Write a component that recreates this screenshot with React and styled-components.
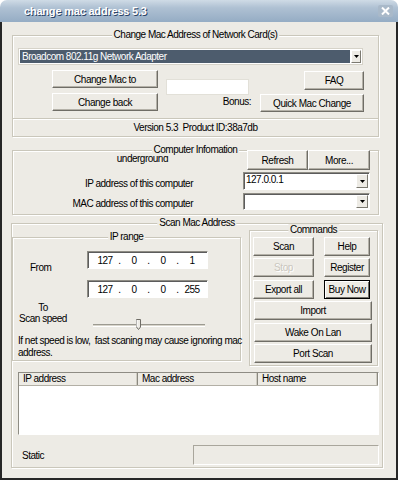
import React from "react";
import styled, { createGlobalStyle } from "styled-components";

const FONT = `"Liberation Sans", Arial, sans-serif`;
const BG = "#edebe5";

const GlobalStyle = createGlobalStyle`
  html, body { margin: 0; padding: 0; background: #fff; }
  body { font-family: ${FONT}; font-size: 10px; letter-spacing: -0.5px; color: #000; }
  * { box-sizing: border-box; }
`;

const Window = styled.div`
  width: 398px;
  height: 480px;
  display: flex;
  flex-direction: column;
  overflow: hidden;
`;

const TitleBar = styled.div`
  height: 22px;
  flex: none;
  display: flex;
  align-items: center;
  justify-content: space-between;
  padding: 0 5px 0 24px;
  border-radius: 7px 7px 0 0;
  background: linear-gradient(180deg, #cfdbe6 0%, #afc1d3 35%, #95acc4 100%);
`;

const Title = styled.span`
  font: bold 11px "Liberation Sans", Arial, sans-serif;
  letter-spacing: -0.2px;
  color: #fff;
  text-shadow: 1px 1px 0 #2c4466;
`;

const CloseBox = styled.div`
  width: 15px;
  height: 12px;
  border-radius: 2px;
  background: #a9b9c9;
  display: flex;
  align-items: center;
  justify-content: center;
`;

const Body = styled.div`
  flex: 1;
  background: ${BG};
  border: 2px solid #262626;
  border-top: none;
  display: flex;
  flex-direction: column;
`;

const Group = styled.div`
  position: relative;
  flex: none;
  margin: ${(p) => p.$mt}px 0 0 ${(p) => p.$ml}px;
  width: ${(p) => p.$w}px;
  height: ${(p) => p.$h}px;
  border: 1px solid #cac7bb;
  box-shadow: inset 1px 1px 0 #fff, 1px 1px 0 #fff;
`;

const Legend = styled.span`
  position: absolute;
  top: -7px;
  left: 50%;
  transform: translateX(-50%);
  padding: 0 2px;
  background: ${BG};
  line-height: 12px;
  white-space: nowrap;
`;

const Button = styled.button`
  flex: none;
  width: ${(p) => p.$w}px;
  height: ${(p) => p.$h || 19}px;
  margin: 0;
  padding: 0;
  font-family: ${FONT};
  font-size: 10px;
  letter-spacing: -0.45px;
  color: ${(p) => (p.disabled ? "#c9c6bd" : "#000")};
  text-shadow: ${(p) => (p.disabled ? "1px 1px 0 #fff" : "none")};
  background: ${BG};
  border: 1px solid;
  border-color: ${(p) => (p.$default ? "#000" : "#fff #6f6d66 #6f6d66 #fff")};
  box-shadow: ${(p) =>
    p.$default
      ? "inset 1px 1px 0 #fff, inset -1px -1px 0 #6f6d66"
      : "inset -1px -1px 0 #b4b1a8"};
`;

/* --- network card combo --- */
const CardSelect = styled.div`
  display: flex;
  margin: 12px 0 0 5px;
  width: 345px;
  height: 17px;
  padding: 1px;
  background: #fff;
  border: 1px solid #d6d3c9;
`;

const CardValue = styled.div`
  flex: 1;
  background: #4d5c6d;
  color: #fff;
  line-height: 13px;
  padding-left: 2px;
`;

const ArrowBtn = styled.div`
  width: ${(p) => p.$w || 10}px;
  margin-left: 1px;
  display: flex;
  align-items: center;
  justify-content: center;
  background: ${BG};
  border: 1px solid;
  border-color: #fff #7b7970 #7b7970 #fff;
`;

const MacRow = styled.div`
  display: flex;
  margin-top: 5px;
  padding-left: 39px;
`;

const Stack = styled.div`
  display: flex;
  flex-direction: column;
  gap: ${(p) => p.$gap}px;
`;

const MiddleCol = styled.div`
  width: 85px;
  margin-left: 8px;
  display: flex;
  flex-direction: column;
`;

const TextInput = styled.div`
  width: 83px;
  height: 16px;
  margin-top: 9px;
  background: #fff;
  border: 1px solid #e2e0d8;
`;

const BonusLabel = styled.div`
  text-align: right;
  line-height: 12px;
  margin-top: 1px;
`;

const RightCol = styled.div`
  width: 104px;
  margin-left: 9px;
  display: flex;
  flex-direction: column;
  align-items: flex-end;
  gap: 4px;
  padding-top: 1px;
`;

const Separator = styled.div`
  margin-top: 6px;
  height: 2px;
  border-top: 1px solid #cac7bb;
  border-bottom: 1px solid #fff;
`;

const VersionLine = styled.div`
  height: 15px;
  line-height: 15px;
  text-align: center;
`;

/* --- computer information --- */
const InfoRow = styled.div`
  display: flex;
  align-items: flex-end;
  height: ${(p) => p.$h}px;
  margin-top: ${(p) => p.$mt}px;
`;

const InfoLabel = styled.div`
  width: 180px;
  text-align: right;
  line-height: 12px;
  padding-right: ${(p) => p.$pr || 0}px;
  align-self: ${(p) => (p.$top ? "flex-start" : "flex-end")};
  margin-top: ${(p) => (p.$top ? 3 : 0)}px;
`;

const Controls = styled.div`
  display: flex;
  height: 100%;
  margin-left: ${(p) => p.$ml}px;
`;

const Combo = styled.div`
  display: flex;
  width: 127px;
  height: 100%;
  background: #fff;
  border: 1px solid;
  border-color: #8e8c84 #fff #fff #8e8c84;
  box-shadow: inset 1px 1px 0 #5c5c5c;
  padding: 1px 1px 1px 2px;
`;

const ComboText = styled.div`
  flex: 1;
  line-height: 12px;
`;

/* --- scan section --- */
const TopSection = styled.div`
  display: flex;
  align-items: flex-start;
`;

const RangeBody = styled.div`
  display: flex;
  padding-top: 13px;
`;

const RangeLabels = styled.div`
  width: 74px;
  display: flex;
  flex-direction: column;
`;

const FromLabel = styled.div`
  margin: 11px 0 0 17px;
  line-height: 12px;
`;

const SpeedLabel = styled.div`
  width: 52px;
  margin: 28px 0 0 4px;
  text-align: center;
  line-height: 11px;
  white-space: nowrap;
`;

const RangeFields = styled.div`
  display: flex;
  flex-direction: column;
  gap: 11px;
`;

const IpField = styled.div`
  display: flex;
  align-items: center;
  width: 121px;
  height: 18px;
  padding-left: 6px;
  background: #fff;
  border: 1px solid;
  border-color: #8e8c84 #fff #fff #8e8c84;
  box-shadow: inset 1px 1px 0 #5c5c5c;
`;

const Octet = styled.span`
  width: 22px;
  text-align: center;
`;

const Dot = styled.span`
  width: 7px;
  text-align: center;
`;

const Slider = styled.div`
  position: relative;
  width: 112px;
  height: 14px;
  margin: 9px 0 0 6px;
`;

const Track = styled.div`
  position: absolute;
  left: 0;
  right: 0;
  top: 6px;
  height: 3px;
  border-top: 1px solid #9c9a91;
  border-bottom: 1px solid #fff;
  background: #d8d5cb;
`;

const Thumb = styled.svg`
  position: absolute;
  left: 43px;
  top: 1px;
`;

const Note = styled.div`
  margin-top: 3px;
  padding-left: 5px;
  line-height: 12px;
  white-space: nowrap;
`;

const CommandGrid = styled.div`
  display: grid;
  grid-template-columns: 61px 46px;
  grid-auto-rows: 19px;
  column-gap: 10px;
  row-gap: 2.4px;
  padding: 6px 0 0 3px;
`;

const WideButton = styled(Button)`
  grid-column: 1 / -1;
  margin-left: 1px;
`;

const ListView = styled.div`
  margin: 6px 0 0 6px;
  width: 361px;
  height: 63px;
  background: #fff;
  border: 1px solid;
  border-color: #8e8c84 #fff #fff #8e8c84;
`;

const ListHeader = styled.div`
  display: flex;
  height: 13px;
  background: ${BG};
  border-bottom: 1px solid #b2afa5;
`;

const HeaderCell = styled.div`
  width: ${(p) => p.$w}px;
  padding-left: 4px;
  line-height: 12px;
  border-right: 1px solid #8a887f;
  box-shadow: inset -1px 0 0 #cfccc2;
`;

const StatusRow = styled.div`
  display: flex;
  align-items: center;
  margin-top: 10px;
`;

const StatusLabel = styled.div`
  width: 181px;
  padding-left: 10px;
`;

const StatusPanel = styled.div`
  width: 186px;
  height: 20px;
  border: 1px solid;
  border-color: #a9a69c #fff #fff #a9a69c;
`;

const DownArrow = () => (
  <svg width="5" height="3" viewBox="0 0 5 3">
    <polygon points="0,0 5,0 2.5,3" fill="#000" />
  </svg>
);

export default function App() {
  return (
    <>
      <GlobalStyle />
      <Window>
        <TitleBar>
          <Title>change mac address 5.3</Title>
          <CloseBox>
            <svg width="9" height="8" viewBox="0 0 9 8">
              <path d="M1 0.5 L8 7.5 M8 0.5 L1 7.5" stroke="#fff" strokeWidth="2" />
            </svg>
          </CloseBox>
        </TitleBar>

        <Body>
          {/* network card */}
          <Group $mt={13} $ml={10} $w={367} $h={102}>
            <Legend>Change Mac Address of Network Card(s)</Legend>
            <CardSelect>
              <CardValue>Broadcom 802.11g Network Adapter</CardValue>
              <ArrowBtn>
                <DownArrow />
              </ArrowBtn>
            </CardSelect>
            <MacRow>
              <Stack $gap={5}>
                <Button $w={106} $h={18}>Change Mac to</Button>
                <Button $w={106} $h={18}>Change back</Button>
              </Stack>
              <MiddleCol>
                <TextInput />
                <BonusLabel>Bonus:</BonusLabel>
              </MiddleCol>
              <RightCol>
                <Button $w={60} $h={19}>FAQ</Button>
                <Button $w={104} $h={18}>Quick Mac Change</Button>
              </RightCol>
            </MacRow>
            <Separator />
            <VersionLine>Version 5.3&nbsp; Product ID:38a7db</VersionLine>
          </Group>

          {/* computer information */}
          <Group $mt={13} $ml={10} $w={367} $h={65}>
            <Legend>Computer Infomation</Legend>
            <InfoRow $h={20} $mt={-1}>
              <InfoLabel $top $pr={25}>underground</InfoLabel>
              <Controls $ml={54}>
                <Button $w={61} $h={20}>Refresh</Button>
                <Button $w={62} $h={20}>More...</Button>
              </Controls>
            </InfoRow>
            <InfoRow $h={18} $mt={2}>
              <InfoLabel>IP address of this computer</InfoLabel>
              <Controls $ml={50}>
                <Combo>
                  <ComboText>127.0.0.1</ComboText>
                  <ArrowBtn $w={12}>
                    <DownArrow />
                  </ArrowBtn>
                </Combo>
              </Controls>
            </InfoRow>
            <InfoRow $h={17} $mt={3}>
              <InfoLabel>MAC address of this computer</InfoLabel>
              <Controls $ml={50}>
                <Combo>
                  <ComboText />
                  <ArrowBtn $w={12}>
                    <DownArrow />
                  </ArrowBtn>
                </Combo>
              </Controls>
            </InfoRow>
          </Group>

          {/* scan */}
          <Group $mt={8} $ml={9} $w={372} $h={245}>
            <Legend>Scan Mac Address</Legend>
            <TopSection>
              <Group $mt={13} $ml={0} $w={229} $h={124}>
                <Legend>IP range</Legend>
                <RangeBody>
                  <RangeLabels>
                    <FromLabel>From</FromLabel>
                    <SpeedLabel>
                      To
                      <br />
                      Scan speed
                    </SpeedLabel>
                  </RangeLabels>
                  <RangeFields>
                    <IpField>
                      <Octet>127</Octet><Dot>.</Dot><Octet>0</Octet><Dot>.</Dot>
                      <Octet>0</Octet><Dot>.</Dot><Octet>1</Octet>
                    </IpField>
                    <IpField>
                      <Octet>127</Octet><Dot>.</Dot><Octet>0</Octet><Dot>.</Dot>
                      <Octet>0</Octet><Dot>.</Dot><Octet>255</Octet>
                    </IpField>
                    <Slider>
                      <Track />
                      <Thumb width="5" height="11" viewBox="0 0 5 11">
                        <path d="M0.5 0.5 H4.5 V8 L2.5 10.5 L0.5 8 Z" fill="#edebe5" stroke="#6f6d66" strokeWidth="1" />
                        <path d="M1 1 V8" stroke="#fff" strokeWidth="1" />
                      </Thumb>
                    </Slider>
                  </RangeFields>
                </RangeBody>
                <Note>
                  If net speed is low,&nbsp; fast scaning may cause ignoring mac
                  <br />
                  address.
                </Note>
              </Group>

              <Group $mt={6} $ml={8} $w={129} $h={136}>
                <Legend>Commands</Legend>
                <CommandGrid>
                  <Button $w={61}>Scan</Button>
                  <Button $w={46}>Help</Button>
                  <Button $w={61} disabled>Stop</Button>
                  <Button $w={46}>Register</Button>
                  <Button $w={61}>Export all</Button>
                  <Button $w={46} $default>Buy Now</Button>
                  <WideButton $w={118}>Import</WideButton>
                  <WideButton $w={118}>Wake On Lan</WideButton>
                  <WideButton $w={118}>Port Scan</WideButton>
                </CommandGrid>
              </Group>
            </TopSection>

            <ListView>
              <ListHeader>
                <HeaderCell $w={119}>IP address</HeaderCell>
                <HeaderCell $w={120}>Mac address</HeaderCell>
                <HeaderCell $w={120}>Host name</HeaderCell>
              </ListHeader>
            </ListView>

            <StatusRow>
              <StatusLabel>Static</StatusLabel>
              <StatusPanel />
            </StatusRow>
          </Group>
        </Body>
      </Window>
    </>
  );
}
